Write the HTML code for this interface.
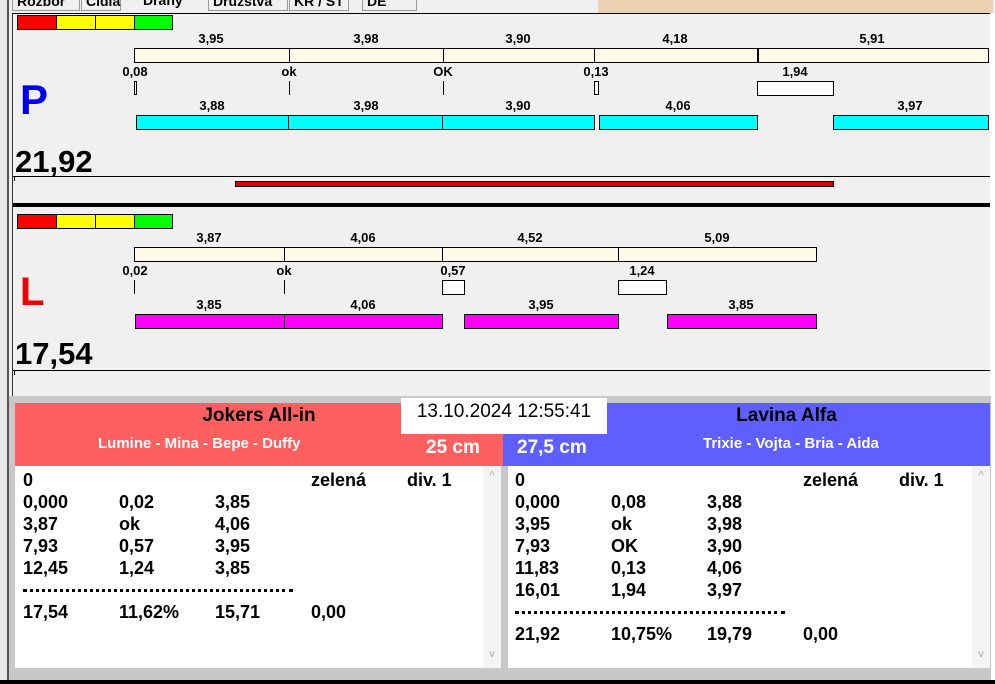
<!DOCTYPE html>
<html><head><meta charset="utf-8"><style>
*{margin:0;padding:0;box-sizing:border-box}
body{width:995px;height:684px;overflow:hidden;background:#f0f0f0;position:relative;font-family:"Liberation Sans Narrow","Liberation Sans",sans-serif;font-weight:bold}
.a{position:absolute}
.b{position:absolute;border:1px solid #000}
.y{background:#fffbe6}
.c{background:#00ffff}
.m{background:#ff00ff}
.w{background:#fff}
.t{position:absolute;font-size:13px;transform:translateX(-50%);white-space:nowrap;line-height:13px}
.l{position:absolute;font-size:18px;line-height:18px;white-space:nowrap}
.vl{position:absolute;width:1px;background:#000}
</style></head><body>
<!-- left dark strip -->
<div class="a" style="left:0;top:0;width:9px;height:684px;background:#e8e8e8;border-right:2px solid #555"></div>
<!-- tabs -->
<div class="a" style="left:9px;top:0;width:590px;height:12px;background:#f0f0f0"></div>
<div class="a" style="left:598px;top:0;width:395px;height:13px;background:#ecd0b2"></div>
<div class="a" style="left:12px;top:-6px;width:68px;height:17px;border:1px solid #999;font-size:14px;padding-left:4px;line-height:12px">Rozbor</div>
<div class="a" style="left:81px;top:-6px;width:40px;height:17px;border:1px solid #999;font-size:14px;padding-left:4px;line-height:12px">Čidla</div>
<div class="a" style="left:123px;top:-6px;width:85px;height:17px;font-size:14px;padding-left:20px;line-height:12px">Dráhy</div>
<div class="a" style="left:208px;top:-6px;width:80px;height:17px;border:1px solid #999;font-size:14px;padding-left:4px;line-height:12px">Družstva</div>
<div class="a" style="left:289px;top:-6px;width:60px;height:17px;border:1px solid #999;font-size:14px;padding-left:4px;line-height:12px">KR / ST</div>
<div class="a" style="left:362px;top:-6px;width:55px;height:17px;border:1px solid #999;font-size:14px;padding-left:4px;line-height:12px">DE</div>
<!-- main panel -->
<div class="a" style="left:12px;top:13px;width:979px;height:385px;border-top:1px solid #000;border-left:1px solid #333;background:#f0f0f0"></div>
<div class="a" style="left:990px;top:13px;width:5px;height:671px;background:#fff"></div>

<!-- P panel -->
<div class="b" style="left:17px;top:15px;width:40px;height:15px;background:#f00"></div>
<div class="b" style="left:56px;top:15px;width:40px;height:15px;background:#ff0"></div>
<div class="b" style="left:95px;top:15px;width:40px;height:15px;background:#ff0"></div>
<div class="b" style="left:134px;top:15px;width:39px;height:15px;background:#0f0"></div>

<div class="b y" style="left:134px;top:48px;width:855px;height:15px"></div>
<div class="vl" style="left:289px;top:48px;height:15px"></div>
<div class="vl" style="left:443px;top:48px;height:15px"></div>
<div class="vl" style="left:594px;top:48px;height:15px"></div>
<div class="vl" style="left:757px;top:48px;height:15px;width:2px"></div>
<div class="t" style="left:211px;top:32px">3,95</div>
<div class="t" style="left:366px;top:32px">3,98</div>
<div class="t" style="left:518px;top:32px">3,90</div>
<div class="t" style="left:675px;top:32px">4,18</div>
<div class="t" style="left:872px;top:32px">5,91</div>
<div class="t" style="left:135px;top:65px">0,08</div>
<div class="t" style="left:289px;top:65px">ok</div>
<div class="t" style="left:443px;top:65px">OK</div>
<div class="t" style="left:596px;top:65px">0,13</div>
<div class="t" style="left:795px;top:65px">1,94</div>
<div class="b w" style="left:134px;top:81px;width:3px;height:14px"></div>
<div class="vl" style="left:289px;top:81px;height:14px"></div>
<div class="vl" style="left:443px;top:81px;height:14px"></div>
<div class="b w" style="left:594px;top:81px;width:5px;height:14px"></div>
<div class="b w" style="left:757px;top:81px;width:77px;height:15px"></div>
<div class="t" style="left:212px;top:99px">3,88</div>
<div class="t" style="left:366px;top:99px">3,98</div>
<div class="t" style="left:518px;top:99px">3,90</div>
<div class="t" style="left:678px;top:99px">4,06</div>
<div class="t" style="left:910px;top:99px">3,97</div>
<div class="b c" style="left:136px;top:115px;width:153px;height:15px"></div>
<div class="b c" style="left:288px;top:115px;width:156px;height:15px"></div>
<div class="b c" style="left:442px;top:115px;width:153px;height:15px"></div>
<div class="b c" style="left:599px;top:115px;width:159px;height:15px"></div>
<div class="b c" style="left:833px;top:115px;width:156px;height:15px"></div>
<div class="a" style="left:20px;top:76px;font-family:'Liberation Sans',sans-serif;font-size:42px;color:#0000ee;line-height:48px">P</div>
<div class="a" style="left:15px;top:144px;font-size:31px;line-height:36px">21,92</div>
<div class="a" style="left:13px;top:176px;width:977px;height:1px;background:#000"></div>
<div class="vl" style="left:14px;top:176px;height:5px"></div>
<div class="b" style="left:235px;top:181px;width:599px;height:6px;background:#e00000"></div>
<div class="a" style="left:13px;top:203px;width:977px;height:4px;background:#000"></div>

<!-- L panel -->
<div class="b" style="left:17px;top:214px;width:40px;height:15px;background:#f00"></div>
<div class="b" style="left:56px;top:214px;width:40px;height:15px;background:#ff0"></div>
<div class="b" style="left:95px;top:214px;width:40px;height:15px;background:#ff0"></div>
<div class="b" style="left:134px;top:214px;width:39px;height:15px;background:#0f0"></div>
<div class="b y" style="left:134px;top:247px;width:683px;height:15px"></div>
<div class="vl" style="left:284px;top:247px;height:15px"></div>
<div class="vl" style="left:442px;top:247px;height:15px"></div>
<div class="vl" style="left:618px;top:247px;height:15px"></div>
<div class="t" style="left:209px;top:231px">3,87</div>
<div class="t" style="left:363px;top:231px">4,06</div>
<div class="t" style="left:530px;top:231px">4,52</div>
<div class="t" style="left:717px;top:231px">5,09</div>
<div class="t" style="left:135px;top:264px">0,02</div>
<div class="t" style="left:284px;top:264px">ok</div>
<div class="t" style="left:453px;top:264px">0,57</div>
<div class="t" style="left:642px;top:264px">1,24</div>
<div class="vl" style="left:134px;top:280px;height:14px"></div>
<div class="vl" style="left:284px;top:280px;height:14px"></div>
<div class="b w" style="left:442px;top:280px;width:23px;height:15px"></div>
<div class="b w" style="left:618px;top:280px;width:49px;height:15px"></div>
<div class="t" style="left:209px;top:298px">3,85</div>
<div class="t" style="left:363px;top:298px">4,06</div>
<div class="t" style="left:541px;top:298px">3,95</div>
<div class="t" style="left:741px;top:298px">3,85</div>
<div class="b m" style="left:135px;top:314px;width:150px;height:15px"></div>
<div class="b m" style="left:284px;top:314px;width:159px;height:15px"></div>
<div class="b m" style="left:464px;top:314px;width:155px;height:15px"></div>
<div class="b m" style="left:667px;top:314px;width:150px;height:15px"></div>
<div class="a" style="left:20px;top:270px;font-family:'Liberation Sans',sans-serif;font-size:40px;color:#ee0000;line-height:44px">L</div>
<div class="a" style="left:15px;top:336px;font-size:31px;line-height:36px">17,54</div>
<div class="a" style="left:13px;top:370px;width:977px;height:1px;background:#000"></div>
<div class="vl" style="left:14px;top:370px;height:5px"></div>

<!-- bottom -->
<div class="a" style="left:9px;top:396px;width:982px;height:288px;background:#c8c8c8"></div>
<div class="a" style="left:15px;top:403px;width:488px;height:63px;background:#ff5f5f"></div>
<div class="a" style="left:503px;top:403px;width:487px;height:63px;background:#5f5fff"></div>
<div class="a" style="left:15px;top:405px;width:488px;text-align:center;font-size:19px;line-height:22px">Jokers All-in</div>
<div class="a" style="left:503px;top:405px;width:487px;text-align:center;font-size:19px;line-height:22px;padding-left:80px">Lavina Alfa</div>
<div class="a" style="left:98px;top:436px;color:#fff;font-size:15px;line-height:16px">Lumine - Mina - Bepe - Duffy</div>
<div class="a" style="left:703px;top:436px;color:#fff;font-size:15px;line-height:16px">Trixie - Vojta - Bria - Aida</div>
<div class="a" style="left:426px;top:437px;color:#fff;font-size:19px;line-height:22px">25 cm</div>
<div class="a" style="left:517px;top:437px;color:#fff;font-size:19px;line-height:22px">27,5 cm</div>
<div class="a" style="left:401px;top:398px;width:206px;height:36px;background:#fff;font-family:'Liberation Sans',sans-serif;font-weight:normal;font-size:19px;line-height:28px;text-align:center">13.10.2024 12:55:41</div>

<div class="a" style="left:15px;top:466px;width:486px;height:202px;background:#fff"></div>
<div class="a" style="left:483px;top:466px;width:18px;height:202px;background:#f4f4f4;color:#bbb;font-size:10px;text-align:center"><div style="margin-top:4px">^</div><div style="margin-top:168px">v</div></div>
<div class="a" style="left:508px;top:466px;width:482px;height:202px;background:#fff"></div>
<div class="a" style="left:972px;top:466px;width:18px;height:202px;background:#f4f4f4;color:#bbb;font-size:10px;text-align:center"><div style="margin-top:4px">^</div><div style="margin-top:168px">v</div></div>
<div class="a" style="left:0;top:680px;width:995px;height:4px;background:#000"></div>

<!-- left list -->
<div class="l" style="left:23px;top:471px">0</div><div class="l" style="left:311px;top:471px">zelená</div><div class="l" style="left:407px;top:471px">div. 1</div>
<div class="l" style="left:23px;top:493px">0,000</div><div class="l" style="left:119px;top:493px">0,02</div><div class="l" style="left:215px;top:493px">3,85</div>
<div class="l" style="left:23px;top:515px">3,87</div><div class="l" style="left:119px;top:515px">ok</div><div class="l" style="left:215px;top:515px">4,06</div>
<div class="l" style="left:23px;top:537px">7,93</div><div class="l" style="left:119px;top:537px">0,57</div><div class="l" style="left:215px;top:537px">3,95</div>
<div class="l" style="left:23px;top:559px">12,45</div><div class="l" style="left:119px;top:559px">1,24</div><div class="l" style="left:215px;top:559px">3,85</div>
<div class="a" style="left:23px;top:589px;width:270px;border-top:3px dotted #000"></div>
<div class="l" style="left:23px;top:603px">17,54</div><div class="l" style="left:119px;top:603px">11,62%</div><div class="l" style="left:215px;top:603px">15,71</div><div class="l" style="left:311px;top:603px">0,00</div>
<!-- right list -->
<div class="l" style="left:515px;top:471px">0</div><div class="l" style="left:803px;top:471px">zelená</div><div class="l" style="left:899px;top:471px">div. 1</div>
<div class="l" style="left:515px;top:493px">0,000</div><div class="l" style="left:611px;top:493px">0,08</div><div class="l" style="left:707px;top:493px">3,88</div>
<div class="l" style="left:515px;top:515px">3,95</div><div class="l" style="left:611px;top:515px">ok</div><div class="l" style="left:707px;top:515px">3,98</div>
<div class="l" style="left:515px;top:537px">7,93</div><div class="l" style="left:611px;top:537px">OK</div><div class="l" style="left:707px;top:537px">3,90</div>
<div class="l" style="left:515px;top:559px">11,83</div><div class="l" style="left:611px;top:559px">0,13</div><div class="l" style="left:707px;top:559px">4,06</div>
<div class="l" style="left:515px;top:581px">16,01</div><div class="l" style="left:611px;top:581px">1,94</div><div class="l" style="left:707px;top:581px">3,97</div>
<div class="a" style="left:515px;top:611px;width:270px;border-top:3px dotted #000"></div>
<div class="l" style="left:515px;top:625px">21,92</div><div class="l" style="left:611px;top:625px">10,75%</div><div class="l" style="left:707px;top:625px">19,79</div><div class="l" style="left:803px;top:625px">0,00</div>
</body></html>
